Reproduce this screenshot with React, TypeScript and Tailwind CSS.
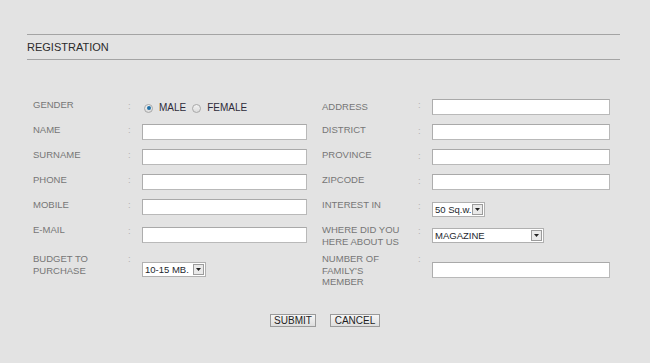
import React from "react";

const font = { fontFamily: '"Liberation Sans", Arial, sans-serif' };

function Label({ children, mt = 0, w = 95 }: { children: React.ReactNode; mt?: number; w?: number }) {
  return (
    <div className="shrink-0 text-[9.5px] leading-[11.5px] text-[#767676]" style={{ marginTop: mt, width: w }}>
      {children}
    </div>
  );
}

function Colon({ mt = 0 }: { mt?: number }) {
  return (
    <div className="w-[14px] shrink-0 text-[9.5px] leading-[11.5px] text-[#b4b4b4]" style={{ marginTop: mt }}>
      :
    </div>
  );
}

function TextInput({ w, mt = 0 }: { w: number; mt?: number }) {
  return (
    <div
      className="h-[16px] bg-white border border-[#b9b9b9] border-t-[#a9a9a9] border-l-[#adadad]"
      style={{ width: w, marginTop: mt }}
    />
  );
}

function Select({ w, text, mt = 0 }: { w: number; text: string; mt?: number }) {
  return (
    <div
      className="h-[15px] bg-white border border-[#b0b0b0] flex items-center justify-between pl-[2px] pr-[1px] whitespace-nowrap"
      style={{ width: w, marginTop: mt }}
    >
      <span className="text-[9.5px] leading-none text-[#231f2e] whitespace-nowrap">{text}</span>
      <span className="w-[11px] h-[11px] shrink-0 bg-[#e9e9e9] border border-[#9c9c9c] flex items-center justify-center">
        <svg width="5" height="3" viewBox="0 0 5 3">
          <path d="M0 0 L5 0 L2.5 3 Z" fill="#222" />
        </svg>
      </span>
    </div>
  );
}

function Radio({ checked }: { checked?: boolean }) {
  return (
    <span className="w-[9px] h-[9px] rounded-full border border-[#a8a8a8] bg-gradient-to-b from-[#f2f2f2] to-[#dcdcdc] flex items-center justify-center shrink-0">
      {checked && <span className="w-[4px] h-[4px] rounded-full bg-[#1f6fa6]" />}
    </span>
  );
}

function Row({ h, children }: { h: number; children: React.ReactNode }) {
  return (
    <div className="flex items-start" style={{ height: h }}>
      {children}
    </div>
  );
}

export default function App() {
  return (
    <div className="w-[650px] h-[363px] bg-[#e3e3e3] pt-[34px] overflow-hidden" style={font}>
      <div className="ml-[27px] w-[593px] h-[26px] border-t border-b border-[#a4a4a4] flex items-center text-[11px] text-[#2b2b2b]">
        REGISTRATION
      </div>

      <div className="flex mt-[39px] pl-[33px] gap-[15px]">
        {/* left column */}
        <div className="w-[274px] flex flex-col">
          <Row h={25}>
            <Label>GENDER</Label>
            <Colon mt={1} />
            <div className="flex items-center mt-[3px] text-[10px] leading-[12px] text-[#2e2b3a]">
              <span className="ml-[2px]"><Radio checked /></span>
              <span className="ml-[6px]">MALE</span>
              <span className="ml-[6px]"><Radio /></span>
              <span className="ml-[6px]">FEMALE</span>
            </div>
          </Row>
          <Row h={25}>
            <Label>NAME</Label>
            <Colon />
            <TextInput w={166} />
          </Row>
          <Row h={25}>
            <Label>SURNAME</Label>
            <Colon />
            <TextInput w={166} />
          </Row>
          <Row h={25}>
            <Label>PHONE</Label>
            <Colon />
            <TextInput w={166} />
          </Row>
          <Row h={25}>
            <Label>MOBILE</Label>
            <Colon />
            <TextInput w={166} />
          </Row>
          <Row h={29}>
            <Label>E-MAIL</Label>
            <Colon mt={1} />
            <TextInput w={166} mt={3} />
          </Row>
          <Row h={30}>
            <Label>
              BUDGET TO
              <br />
              PURCHASE
            </Label>
            <Colon />
            <Select w={64} text="10-15 MB." mt={9} />
          </Row>
        </div>

        {/* right column */}
        <div className="w-[288px] flex flex-col">
          <Row h={25}>
            <Label w={96} mt={2}>ADDRESS</Label>
            <Colon mt={0} />
            <TextInput w={178} />
          </Row>
          <Row h={25}>
            <Label w={96}>DISTRICT</Label>
            <Colon mt={1} />
            <TextInput w={178} />
          </Row>
          <Row h={25}>
            <Label w={96}>PROVINCE</Label>
            <Colon mt={1} />
            <TextInput w={178} />
          </Row>
          <Row h={25}>
            <Label w={96}>ZIPCODE</Label>
            <Colon mt={1} />
            <TextInput w={178} />
          </Row>
          <Row h={25}>
            <Label w={96}>INTEREST IN</Label>
            <Colon mt={1} />
            <Select w={53} text="50 Sq.w." mt={3} />
          </Row>
          <Row h={29}>
            <Label w={96}>
              WHERE DID YOU
              <br />
              HERE ABOUT US
            </Label>
            <Colon mt={1} />
            <Select w={112} text="MAGAZINE" mt={4} />
          </Row>
          <Row h={35}>
            <Label w={96}>
              NUMBER OF
              <br />
              FAMILY'S
              <br />
              MEMBER
            </Label>
            <Colon mt={0} />
            <TextInput w={178} mt={9} />
          </Row>
        </div>
      </div>

      <div className="flex justify-center gap-[14px] mt-[26px]">
        <button className="h-[13px] w-[46px] border border-[#9a9a9a] bg-gradient-to-b from-[#f6f6f6] to-[#dedede] text-[10px] leading-none text-[#1e1e1e] flex items-center justify-center">
          SUBMIT
        </button>
        <button className="h-[13px] w-[50px] border border-[#9a9a9a] bg-gradient-to-b from-[#f6f6f6] to-[#dedede] text-[10px] leading-none text-[#1e1e1e] flex items-center justify-center">
          CANCEL
        </button>
      </div>
    </div>
  );
}
